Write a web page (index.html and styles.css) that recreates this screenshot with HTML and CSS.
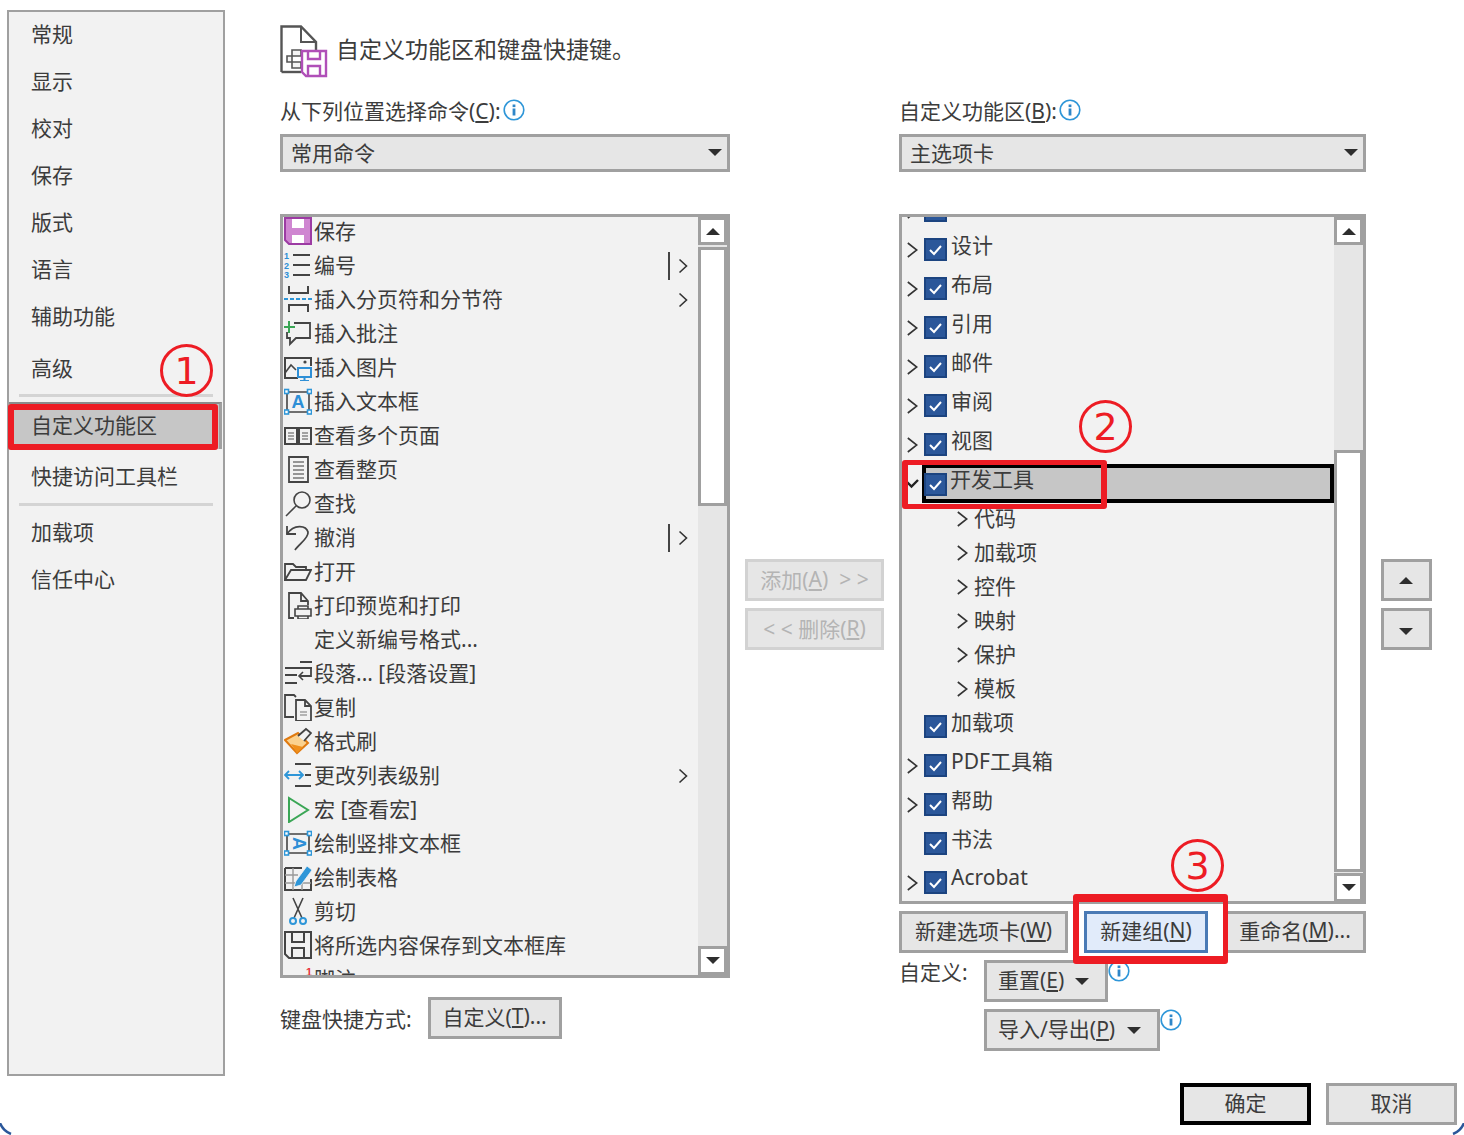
FILE: index.html
```html
<!DOCTYPE html>
<html lang="zh-CN">
<head>
    <meta charset="UTF-8">
    <title>自定义功能区</title>
    <link rel="stylesheet" href="styles.css">
</head>
<body>
<svg class="defs" width="0" height="0">
    <symbol id="chev" viewBox="0 0 10 16"><path d="M1.5 1.5 8.500 8 1.5 14.5" fill="none" stroke="#333" stroke-width="1.6"/></symbol>
    <symbol id="chev-lg" viewBox="0 0 11 16"><path d="M.8 1 9.8 8 .8 15" fill="none" stroke="#333" stroke-width="1.6"/></symbol>
    <symbol id="tick" viewBox="0 0 19 19"><path d="M4 10 8 14 15 6" fill="none" stroke="#fff" stroke-width="2"/></symbol>
    <symbol id="info" viewBox="0 0 22 22"><circle cx="11" cy="11" r="9.8" fill="#fff" stroke="#2e96d8" stroke-width="1.6"/><rect x="9.6" y="9.5" width="2.8" height="7" fill="#2e86c8"/><rect x="9.6" y="5.5" width="2.8" height="2.6" fill="#2e86c8"/></symbol>
</svg>

<div class="dialog">
    <nav class="sidebar">
        <div class="nav-item">常规</div>
        <div class="nav-item">显示</div>
        <div class="nav-item">校对</div>
        <div class="nav-item">保存</div>
        <div class="nav-item">版式</div>
        <div class="nav-item">语言</div>
        <div class="nav-item">辅助功能</div>
        <div class="nav-item nav-gap">高级</div>
        <div class="nav-rule"></div>
        <div class="nav-item nav-active">自定义功能区</div>
        <div class="nav-item nav-short">快捷访问工具栏</div>
        <div class="nav-rule nav-rule2"></div>
        <div class="nav-item">加载项</div>
        <div class="nav-item">信任中心</div>
    </nav>

    <main class="main">
        <header class="head">
            <svg class="head-icon" width="48" height="52" viewBox="0 0 48 52">
                <path d="M1.5 47V1.5H21L36 17V26" fill="none" stroke="#555" stroke-width="2.4"/>
                <path d="M21 1.5V17H36" fill="none" stroke="#555" stroke-width="2"/>
                <path d="M1.5 47H21" stroke="#555" stroke-width="2.4"/>
                <path d="M12 25H21V31H12ZM7 31H12V37H7ZM12 37H21V43H12Z" fill="#f4f4f4" stroke="#555" stroke-width="1.6"/>
                <path d="M22 26H46V51H26L22 47Z" fill="#fff" stroke="#b04fb8" stroke-width="2.4"/>
                <path d="M28 26V34H40V26M28 51V41H40V51" fill="none" stroke="#b04fb8" stroke-width="2.4"/>
            </svg>
            <span>自定义功能区和键盘快捷键。</span>
        </header>

        <div class="columns">
            <section class="col-left">
                <div class="field-label">从下列位置选择命令(<u>C</u>):<svg class="info"><use href="#info"/></svg></div>
                <div class="combo">常用命令<i class="caret"></i></div>

                <div class="listbox">
                    <div class="list-body">
                        <div class="cmd">
                            <svg viewBox="0 0 28 28"><path d="M1 1H27V27H5L1 23Z" fill="#cf86d1" stroke="#9c3ba3" stroke-width="2"/><rect x="8" y="2" width="12" height="9" fill="#fff"/><rect x="8" y="18" width="12" height="8" fill="#fff"/></svg>
                            保存
                        </div>
                        <div class="cmd">
                            <svg viewBox="0 0 28 28"><text x="0" y="8" class="num">1</text><text x="0" y="17.500" class="num">2</text><text x="0" y="27" class="num">3</text><path d="M9 4H26M9 14H26M9 24H26" stroke="#444" stroke-width="2"/></svg>
                            编号
                            <span class="sub"><b></b><svg class="chev"><use href="#chev"/></svg></span>
                        </div>
                        <div class="cmd">
                            <svg viewBox="0 0 28 28"><path d="M5 1V8H24V1M5 27V20H24V27" fill="none" stroke="#444" stroke-width="2"/><path d="M0 14H28" stroke="#2e96d8" stroke-width="2" stroke-dasharray="4 2"/></svg>
                            插入分页符和分节符
                            <span class="sub"><svg class="chev"><use href="#chev"/></svg></span>
                        </div>
                        <div class="cmd">
                            <svg viewBox="0 0 28 28"><path d="M10 4H26V19H12L6 25V19H3V13" fill="none" stroke="#444" stroke-width="1.8"/><path d="M5 2V14M0 8H11" stroke="#3aa655" stroke-width="2"/></svg>
                            插入批注
                        </div>
                        <div class="cmd">
                            <svg viewBox="0 0 28 28"><path d="M14 25H1V5H27V13" fill="none" stroke="#444" stroke-width="2"/><path d="M1 20 7 12 12 17" fill="none" stroke="#444" stroke-width="1.6"/><circle cx="21" cy="9" r="1.6" fill="#444"/><path d="M14 15H27V24H14Z" fill="#f2f2f2" stroke="#2e8fd6" stroke-width="2"/><path d="M20.5 24V27M16 28H25" stroke="#2e8fd6" stroke-width="2"/></svg>
                            插入图片
                        </div>
                        <div class="cmd">
                            <svg viewBox="0 0 28 28"><path d="M3 5H25V25H3Z" fill="none" stroke="#444" stroke-width="1.6"/><rect x="0.5" y="2.5" width="4" height="4" fill="#fff" stroke="#2e96d8" stroke-width="1.6"/><rect x="23.500" y="2.5" width="4" height="4" fill="#fff" stroke="#2e96d8" stroke-width="1.6"/><rect x="0.5" y="23" width="4" height="4" fill="#fff" stroke="#2e96d8" stroke-width="1.6"/><rect x="23.5" y="23" width="4" height="4" fill="#fff" stroke="#2e96d8" stroke-width="1.6"/><text x="14" y="21" class="tb">A</text></svg>
                            插入文本框
                        </div>
                        <div class="cmd">
                            <svg viewBox="0 0 28 28"><path d="M1 7H13V23H1ZM15 7H27V23H15Z" fill="none" stroke="#444" stroke-width="2"/><path d="M4 12H10M4 15H10M4 18H10M18 12H24M18 15H24M18 18H24" stroke="#888" stroke-width="1.4"/></svg>
                            查看多个页面
                        </div>
                        <div class="cmd">
                            <svg viewBox="0 0 28 28"><path d="M5 2H24V27H5Z" fill="none" stroke="#444" stroke-width="1.8"/><path d="M9 7H20M9 11H20M9 15H20M9 19H20M9 23H20" stroke="#777" stroke-width="1.4"/></svg>
                            查看整页
                        </div>
                        <div class="cmd">
                            <svg viewBox="0 0 28 28"><circle cx="18" cy="11" r="8" fill="none" stroke="#444" stroke-width="1.6"/><path d="M12 17 2 27" stroke="#444" stroke-width="1.6"/></svg>
                            查找
                        </div>
                        <div class="cmd">
                            <svg viewBox="0 0 28 28"><path d="M3 3V11H12" fill="none" stroke="#444" stroke-width="1.8"/><path d="M3 11C10 1 22 2 24 9 25 15 15 21 11 27" fill="none" stroke="#444" stroke-width="1.8"/></svg>
                            撤消
                            <span class="sub"><b></b><svg class="chev"><use href="#chev"/></svg></span>
                        </div>
                        <div class="cmd">
                            <svg viewBox="0 0 28 28"><path d="M1 23V7H9L12 10H22V13" fill="none" stroke="#444" stroke-width="1.8"/><path d="M1 23 7 13H27L22 23Z" fill="none" stroke="#444" stroke-width="1.8"/></svg>
                            打开
                        </div>
                        <div class="cmd">
                            <svg viewBox="0 0 28 28"><path d="M10 27H5V2H17L24 10V14M17 2V10H24" fill="none" stroke="#444" stroke-width="1.8"/><path d="M11 18H27V25H11Z M14 18V15H24V18M14 25V28H24V25" fill="none" stroke="#444" stroke-width="1.6"/></svg>
                            打印预览和打印
                        </div>
                        <div class="cmd">
                            <svg viewBox="0 0 28 28"></svg>
                            定义新编号格式...
                        </div>
                        <div class="cmd">
                            <svg viewBox="0 0 28 28"><path d="M16 3H28M1 9H28M1 16H13M1 24H13" stroke="#444" stroke-width="1.8"/><path d="M27 9V17H16" fill="none" stroke="#444" stroke-width="1.8"/><path d="M19 13 15 17 19 21" fill="none" stroke="#444" stroke-width="1.6"/></svg>
                            段落... [段落设置]
                        </div>
                        <div class="cmd">
                            <svg viewBox="0 0 28 28"><path d="M10 24H1V2H10L12 4" fill="none" stroke="#444" stroke-width="1.8"/><path d="M12 7H21L27 13V28H12Z M21 7V13H27" fill="#f2f2f2" stroke="#444" stroke-width="1.8"/><path d="M16 19H23M16 22H23" stroke="#777" stroke-width="1.2"/></svg>
                            复制
                        </div>
                        <div class="cmd">
                            <svg viewBox="0 0 28 28"><path d="M1 13 14 6 24 16 13 26Z" fill="#fbd28f" stroke="#e07a10" stroke-width="2"/><path d="M7 17 13 26 19 20Z" fill="#f0901c"/><path d="M14 9 22 2 27 6 20 14" fill="#f2f2f2" stroke="#444" stroke-width="1.8"/></svg>
                            格式刷
                        </div>
                        <div class="cmd">
                            <svg viewBox="0 0 28 28"><path d="M1 14H19M5 10 1 14 5 18M15 10 19 14 15 18" fill="none" stroke="#2e96d8" stroke-width="1.8"/><path d="M11 3H27M21 14H27M11 25H27" stroke="#444" stroke-width="1.8"/></svg>
                            更改列表级别
                            <span class="sub"><svg class="chev"><use href="#chev"/></svg></span>
                        </div>
                        <div class="cmd">
                            <svg viewBox="0 0 28 28"><path d="M5 3V27L24 15Z" fill="none" stroke="#3aa655" stroke-width="2"/></svg>
                            宏 [查看宏]
                        </div>
                        <div class="cmd">
                            <svg viewBox="0 0 28 28"><path d="M3 5H25V24H3Z" fill="none" stroke="#444" stroke-width="1.6"/><rect x="0.5" y="2.5" width="4" height="4" fill="#fff" stroke="#2e96d8" stroke-width="1.6"/><rect x="23.5" y="2.5" width="4" height="4" fill="#fff" stroke="#2e96d8" stroke-width="1.6"/><rect x="0.5" y="22" width="4" height="4" fill="#fff" stroke="#2e96d8" stroke-width="1.6"/><rect x="23.5" y="22" width="4" height="4" fill="#fff" stroke="#2e96d8" stroke-width="1.6"/><text x="0" y="0" class="tb" transform="translate(9 14.500) rotate(90)">A</text></svg>
                            绘制竖排文本框
                        </div>
                        <div class="cmd">
                            <svg viewBox="0 0 28 28"><path d="M1 5H18M1 5V27H27V16" fill="none" stroke="#444" stroke-width="2"/><path d="M1 12H14M1 20H27M9 5V27M18 20V27" fill="none" stroke="#999" stroke-width="1.4"/><path d="M10 24 12 18 23 3 28 7 17 22Z" fill="#2e96d8" stroke="#f2f2f2" stroke-width=".8"/></svg>
                            绘制表格
                        </div>
                        <div class="cmd">
                            <svg viewBox="0 0 28 28"><path d="M9 1 18 21M19 1 10 21" fill="none" stroke="#444" stroke-width="1.6"/><circle cx="9" cy="24" r="3" fill="none" stroke="#2e96d8" stroke-width="2"/><circle cx="19" cy="24" r="3" fill="none" stroke="#2e96d8" stroke-width="2"/></svg>
                            剪切
                        </div>
                        <div class="cmd">
                            <svg viewBox="0 0 28 28"><path d="M1 1H27V27H5L1 23Z" fill="none" stroke="#444" stroke-width="2"/><path d="M8 1V11H20V1M8 27V17H20V27" fill="none" stroke="#444" stroke-width="2"/></svg>
                            将所选内容保存到文本框库
                        </div>
                        <div class="cmd">
                            <svg viewBox="0 0 28 28"><path d="M8 14V18M4 17H12M18 14V18" stroke="#444" stroke-width="1.6"/><text x="22" y="11" class="fn">1</text></svg>
                            脚注
                        </div>
                    </div>
                    <div class="scrollbar">
                        <div class="sb-btn"><i class="tri-up"></i></div>
                        <div class="sb-thumb list-thumb"></div>
                        <div class="sb-fill"></div>
                        <div class="sb-btn sb-down"><i class="caret"></i></div>
                    </div>
                </div>

                <div class="shortcut">键盘快捷方式:<button class="btn shortcut-btn">自定义(<u>T</u>)...</button></div>
            </section>

            <section class="col-mid">
                <button class="btn btn-off">添加(<u>A</u>)&nbsp;&nbsp;&gt; &gt;</button>
                <button class="btn btn-off">&lt; &lt; 删除(<u>R</u>)</button>
            </section>

            <section class="col-right">
                <div class="field-label">自定义功能区(<u>B</u>):<svg class="info"><use href="#info"/></svg></div>
                <div class="combo">主选项卡<i class="caret"></i></div>

                <div class="listbox tree">
                    <div class="tree-body">
                        <div class="node"><svg class="chev"><use href="#chev-lg"/></svg><span class="check"><svg><use href="#tick"/></svg></span>开始</div>
                        <div class="node"><svg class="chev"><use href="#chev-lg"/></svg><span class="check"><svg><use href="#tick"/></svg></span>设计</div>
                        <div class="node"><svg class="chev"><use href="#chev-lg"/></svg><span class="check"><svg><use href="#tick"/></svg></span>布局</div>
                        <div class="node"><svg class="chev"><use href="#chev-lg"/></svg><span class="check"><svg><use href="#tick"/></svg></span>引用</div>
                        <div class="node"><svg class="chev"><use href="#chev-lg"/></svg><span class="check"><svg><use href="#tick"/></svg></span>邮件</div>
                        <div class="node"><svg class="chev"><use href="#chev-lg"/></svg><span class="check"><svg><use href="#tick"/></svg></span>审阅</div>
                        <div class="node"><svg class="chev"><use href="#chev-lg"/></svg><span class="check"><svg><use href="#tick"/></svg></span>视图</div>
                        <div class="node node-open">
                            <svg class="expander" viewBox="0 0 14 10"><path d="M1 2 6.500 7.500 13 1" fill="none" stroke="#222" stroke-width="2.4"/></svg>
                            <div class="node-sel"><span class="check"><svg><use href="#tick"/></svg></span>开发工具</div>
                        </div>
                        <div class="leaf"><svg class="chev"><use href="#chev-lg"/></svg>代码</div>
                        <div class="leaf"><svg class="chev"><use href="#chev-lg"/></svg>加载项</div>
                        <div class="leaf"><svg class="chev"><use href="#chev-lg"/></svg>控件</div>
                        <div class="leaf"><svg class="chev"><use href="#chev-lg"/></svg>映射</div>
                        <div class="leaf"><svg class="chev"><use href="#chev-lg"/></svg>保护</div>
                        <div class="leaf"><svg class="chev"><use href="#chev-lg"/></svg>模板</div>
                        <div class="node node-after"><span class="nochev"></span><span class="check"><svg><use href="#tick"/></svg></span>加载项</div>
                        <div class="node"><svg class="chev"><use href="#chev-lg"/></svg><span class="check"><svg><use href="#tick"/></svg></span>PDF工具箱</div>
                        <div class="node"><svg class="chev"><use href="#chev-lg"/></svg><span class="check"><svg><use href="#tick"/></svg></span>帮助</div>
                        <div class="node"><span class="nochev"></span><span class="check"><svg><use href="#tick"/></svg></span>书法</div>
                        <div class="node"><svg class="chev"><use href="#chev-lg"/></svg><span class="check"><svg><use href="#tick"/></svg></span>Acrobat</div>
                    </div>
                    <div class="scrollbar">
                        <div class="sb-btn"><i class="tri-up"></i></div>
                        <div class="sb-thumb tree-thumb"></div>
                        <div class="sb-btn sb-down"><i class="caret"></i></div>
                    </div>
                </div>

                <div class="tree-actions">
                    <button class="btn act-tab">新建选项卡(<u>W</u>)</button>
                    <button class="btn btn-hot act-group">新建组(<u>N</u>)</button>
                    <button class="btn act-rename">重命名(<u>M</u>)...</button>
                </div>

                <div class="custom-row">
                    <span class="custom-label">自定义:</span>
                    <button class="btn btn-menu btn-reset"><span>重置(<u>E</u>)</span><i class="caret"></i></button>
                    <svg class="info-btn"><use href="#info"/></svg>
                </div>
                <div class="custom-row custom-row2">
                    <button class="btn btn-menu btn-import"><span>导入/导出(<u>P</u>)</span><i class="caret"></i></button>
                    <svg class="info-btn"><use href="#info"/></svg>
                </div>
            </section>

            <section class="col-move">
                <button class="btn btn-move"><i class="tri-up"></i></button>
                <button class="btn btn-move"><i class="caret"></i></button>
            </section>
        </div>

        <footer class="footer">
            <button class="btn btn-ok">确定</button>
            <button class="btn btn-cancel">取消</button>
        </footer>
    </main>
</div>

<!-- 红色标注 -->
<div class="mark mark-nav"></div>
<div class="mark mark-dev"></div>
<div class="mark mark-group"></div>
<div class="circled c1">1</div>
<div class="circled c2">2</div>
<div class="circled c3">3</div>

<svg class="corner corner-l" viewBox="0 0 12 12"><path d="M0 0C2 5 6 9 11 11" fill="none" stroke="#2b579a" stroke-width="2.5"/></svg>
<svg class="corner corner-r" viewBox="0 0 12 12"><path d="M12 0C10 5 6 9 1 11" fill="none" stroke="#2b579a" stroke-width="2.5"/></svg>
</body>
</html>
```

FILE: styles.css
```css
* {
    box-sizing: border-box;
}
html, body {
    margin: 0;
    height: 1135px;
    overflow: hidden;
}
body {
    position: relative;
    background-color: #fff;
    color: #3c3c3c;
    font-family: "Noto Sans", "Noto Sans CJK SC", sans-serif;
    font-size: 21px;
}
.defs {
    position: absolute;
}
.dialog {
    display: flex;
    padding: 10px 0 0 7px;
}

/* 左侧导航 */
.sidebar {
    width: 218px;
    height: 1066px;
    flex-shrink: 0;
    border: 2px solid #a0a0a0;
    background-color: #f2f2f2;
}
.nav-item {
    height: 47px;
    line-height: 45px;
    padding-left: 22px;
}
.nav-gap {
    margin-top: 4px;
    line-height: 47px;
}
.nav-rule {
    height: 3px;
    margin: 2px 10px 5px 10px;
    background-color: #d4d4d4;
}
.nav-active {
    margin-right: 1px;
    background-color: #c6c6c6;
    border-top: 2px solid #8c8c8c;
    border-right: 3px solid #a0a0a0;
    line-height: 42px;
}
.nav-short {
    height: 55px;
    line-height: 54px;
}
.nav-rule2 {
    margin: -1px 10px 4px 10px;
}

.main {
    margin-left: 55px;
    width: 1177px;
    padding-top: 15px;
}
.head {
    display: flex;
    align-items: center;
    height: 50px;
    gap: 8px;
    padding-bottom: 4px;
    font-size: 23px;
}
.head-icon {
    flex-shrink: 0;
    margin-top: 6px;
    overflow: visible;
}
.columns {
    display: flex;
    margin-top: 21px;
}
.col-left {
    width: 450px;
    flex-shrink: 0;
}
.col-mid {
    width: 169px;
    flex-shrink: 0;
    padding: 463px 0 0 15px;
    display: flex;
    flex-direction: column;
    gap: 7px;
}
.col-right {
    width: 467px;
    flex-shrink: 0;
}
.col-move {
    padding: 463px 0 0 15px;
    display: flex;
    flex-direction: column;
    gap: 7px;
}

.field-label {
    display: flex;
    align-items: flex-start;
    height: 32px;
    line-height: 30px;
}
.info {
    width: 22px;
    height: 22px;
    margin: 3px 0 0 2px;
}
.combo {
    display: flex;
    align-items: center;
    justify-content: space-between;
    height: 38px;
    margin-top: 6px;
    padding: 0 5px 2px 8px;
    border: 3px solid #a0a0a0;
    background-color: #e6e6e6;
}
.caret {
    width: 0;
    height: 0;
    border-left: 7px solid transparent;
    border-right: 7px solid transparent;
    border-top: 7px solid #2e2e2e;
}
.tri-up {
    width: 0;
    height: 0;
    border-left: 7px solid transparent;
    border-right: 7px solid transparent;
    border-bottom: 7px solid #2e2e2e;
}

/* 列表 */
.listbox {
    display: flex;
    height: 764px;
    margin-top: 42px;
    border: 3px solid #a0a0a0;
    background-color: #f2f2f2;
    overflow: hidden;
}
.list-body {
    flex: 1;
    margin-top: -3px;
    min-width: 0;
}
.cmd {
    display: flex;
    align-items: center;
    height: 34px;
    padding: 0 10px 2px 1px;
    white-space: nowrap;
}
.cmd > svg {
    width: 28px;
    height: 28px;
    margin: 2px 2px 0 0;
    flex-shrink: 0;
    overflow: hidden;
}
.num {
    font: bold 9px "Liberation Sans", sans-serif;
    fill: #2e8fd6;
}
.tb {
    font: bold 18px "Liberation Sans", sans-serif;
    fill: #2e8fd6;
    text-anchor: middle;
}
.fn {
    font: bold 11px "Liberation Sans", sans-serif;
    fill: #e8333a;
}
.sub {
    margin-left: auto;
    margin-top: 4px;
    display: flex;
    align-items: center;
    gap: 8px;
}
.sub b {
    width: 2px;
    height: 28px;
    background-color: #444;
}
.chev {
    width: 10px;
    height: 16px;
    flex-shrink: 0;
}

.scrollbar {
    width: 29px;
    flex-shrink: 0;
    display: flex;
    flex-direction: column;
    background-color: #e6e6e6;
}
.sb-btn {
    display: flex;
    align-items: center;
    justify-content: center;
    height: 28px;
    flex-shrink: 0;
    border: 3px solid #a0a0a0;
    background-color: #fff;
}
.sb-down {
    height: 29px;
}
.sb-thumb {
    border: 3px solid #a0a0a0;
    background-color: #fff;
    flex-shrink: 0;
}
.list-thumb {
    height: 259px;
    margin-top: 2px;
}
.sb-fill {
    flex: 1;
}
.tree-thumb {
    height: 422px;
    margin-top: 205px;
    margin-bottom: 1px;
}

/* 树 */
.tree {
    height: 690px;
}
.tree-body {
    flex: 1;
    margin-top: -27px;
    min-width: 0;
    white-space: nowrap;
}
.node {
    display: flex;
    align-items: center;
    height: 39px;
    padding-left: 4px;
    padding-bottom: 9px;
}
.node-after {
    margin-top: -1px;
}
.node .chev {
    width: 11px;
    margin: 11px 6px 0 1px;
}
.nochev {
    width: 18px;
    flex-shrink: 0;
}
.check {
    display: flex;
    width: 23px;
    height: 23px;
    margin: 11px 4px 0 0;
    flex-shrink: 0;
    border: 2px solid #1c4480;
    background-color: #2b579a;
}
.check svg {
    width: 19px;
    height: 19px;
}
.node-open {
    height: 40px;
    padding: 0;
    align-items: flex-end;
}
.expander {
    width: 14px;
    height: 10px;
    margin: 0 3px 14px 3px;
    flex-shrink: 0;
}
.node-sel {
    flex: 1;
    display: flex;
    align-items: center;
    height: 39px;
    padding: 0 0 11px 2px;
    background-color: #c6c6c6;
    box-shadow: inset 0 0 0 4px #000;
}
.node-sel .check {
    margin: 13px 3px 0 0;
}
.leaf {
    display: flex;
    align-items: center;
    gap: 6px;
    height: 34px;
    padding-left: 55px;
    padding-bottom: 6px;
}
.leaf .chev {
    width: 11px;
    margin-top: 4px;
}

/* 按钮 */
.btn {
    display: flex;
    align-items: center;
    justify-content: center;
    height: 42px;
    padding: 0 0 5px;
    border: 3px solid #a0a0a0;
    background-color: #e6e6e6;
    color: #3c3c3c;
    font: inherit;
    white-space: nowrap;
}
.btn-off {
    width: 139px;
    padding-bottom: 3px;
    border-color: #d2d2d2;
    color: #b4b4b4;
}
.btn-move {
    width: 51px;
    padding: 0 2px 0 0;
}
.shortcut {
    display: flex;
    align-items: center;
    margin-top: 19px;
}
.shortcut-btn {
    width: 134px;
    margin-left: 16px;
}
.tree-actions {
    display: flex;
    justify-content: space-between;
    margin-top: 7px;
}
.act-tab {
    width: 169px;
}
.act-group {
    width: 124px;
}
.act-rename {
    width: 142px;
}
.btn-hot {
    background-color: #e1ebfa;
    border-color: #4a7ab5;
}
.custom-row {
    display: flex;
    align-items: flex-start;
    margin-top: 7px;
}
.custom-row2 {
    padding-left: 85px;
}
.custom-label {
    width: 85px;
    line-height: 24px;
}
.btn-menu {
    justify-content: space-between;
    padding: 0 16px 5px 11px;
}
.btn-reset {
    width: 124px;
}
.btn-import {
    width: 176px;
}
.btn .caret {
    margin-top: 5px;
}
.info-btn {
    width: 22px;
    height: 22px;
}
.footer {
    display: flex;
    justify-content: flex-end;
    gap: 15px;
    margin-top: 32px;
}
.btn-ok,
.btn-cancel {
    width: 131px;
}
.btn-ok {
    border: 4px solid #000;
}

/* 标注 */
.mark {
    position: absolute;
    border: 6px solid #ed1c24;
    border-radius: 3px;
}
.mark-nav {
    left: 8px;
    top: 404px;
    width: 210px;
    height: 46px;
}
.mark-dev {
    left: 902px;
    top: 460px;
    width: 205px;
    height: 49px;
    border-width: 5px 6px;
}
.mark-group {
    left: 1073px;
    top: 894px;
    width: 155px;
    height: 70px;
    border-width: 8px 5px 8px 6px;
}
.circled {
    position: absolute;
    display: flex;
    align-items: center;
    justify-content: center;
    width: 53px;
    height: 53px;
    border: 3px solid #ed1c24;
    border-radius: 50%;
    color: #ed1c24;
    font-family: "DejaVu Sans", sans-serif;
    font-size: 38px;
}
.c1 {
    left: 160px;
    top: 344px;
}
.c2 {
    left: 1079px;
    top: 400px;
}
.c3 {
    left: 1171px;
    top: 839px;
}
.corner {
    position: absolute;
    top: 1123px;
    width: 12px;
    height: 12px;
}
.corner-l {
    left: 0;
}
.corner-r {
    right: 0;
}
```
